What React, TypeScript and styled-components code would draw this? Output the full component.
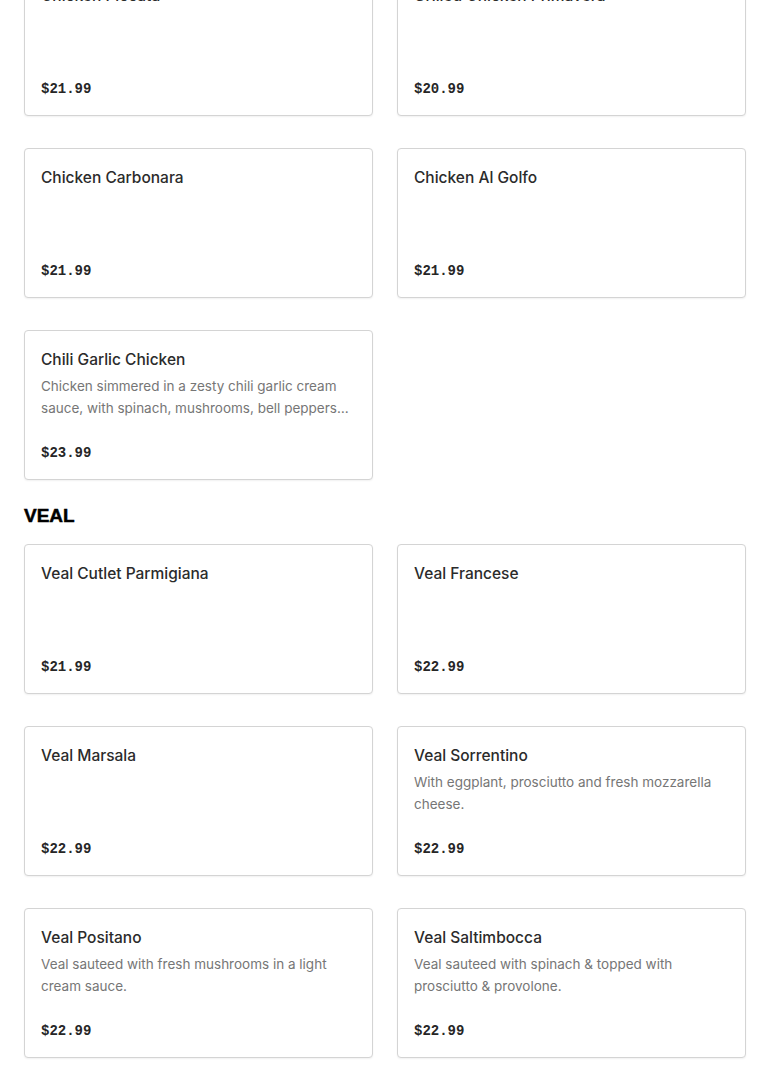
import React from "react";
import styled, { createGlobalStyle } from "styled-components";

interface Item {
  name: string;
  description?: string;
  price: string;
}

interface Section {
  title?: string;
  items: Item[];
}

const sections: Section[] = [
  {
    items: [
      { name: "Chicken Piccata", price: "$21.99" },
      { name: "Grilled Chicken Primavera", price: "$20.99" },
      { name: "Chicken Carbonara", price: "$21.99" },
      { name: "Chicken Al Golfo", price: "$21.99" },
      {
        name: "Chili Garlic Chicken",
        description:
          "Chicken simmered in a zesty chili garlic cream sauce, with spinach, mushrooms, bell peppers and onions over penne.",
        price: "$23.99",
      },
    ],
  },
  {
    title: "VEAL",
    items: [
      { name: "Veal Cutlet Parmigiana", price: "$21.99" },
      { name: "Veal Francese", price: "$22.99" },
      { name: "Veal Marsala", price: "$22.99" },
      {
        name: "Veal Sorrentino",
        description: "With eggplant, prosciutto and fresh mozzarella cheese.",
        price: "$22.99",
      },
      {
        name: "Veal Positano",
        description: "Veal sauteed with fresh mushrooms in a light cream sauce.",
        price: "$22.99",
      },
      {
        name: "Veal Saltimbocca",
        description: "Veal sauteed with spinach & topped with prosciutto & provolone.",
        price: "$22.99",
      },
      { name: "Veal Piccata", price: "$22.99" },
    ],
  },
];

const App: React.FC = () => {
  return (
    <>
      <GlobalStyle />
      <Page>
        {sections.map((section, i) => (
          <SectionBlock key={i}>
            {section.title && <SectionTitle>{section.title}</SectionTitle>}
            <Grid>
              {section.items.map((item) => (
                <Card key={item.name}>
                  <ItemName>{item.name}</ItemName>
                  {item.description && <Description>{item.description}</Description>}
                  <Price>{item.price}</Price>
                </Card>
              ))}
            </Grid>
          </SectionBlock>
        ))}
      </Page>
    </>
  );
};

export default App;

/** ============================= styled-components ============================= */

const GlobalStyle = createGlobalStyle`
  html, body {
    margin: 0;
    padding: 0;
    background: #ffffff;
    overflow: hidden;
  }
  body {
    font-family: Inter, "Liberation Sans", sans-serif;
    -webkit-font-smoothing: antialiased;
  }
`;

const Page = styled.main`
  margin-top: -34px;
  padding: 0 25px 0 24px;
  display: flex;
  flex-direction: column;
  gap: 24px;
`;

const SectionBlock = styled.section`
  display: flex;
  flex-direction: column;
`;

const SectionTitle = styled.h2`
  margin: 0 0 16px;
  font-family: "Liberation Sans", Arial, sans-serif;
  font-weight: 900;
  font-size: 19px;
  line-height: 24px;
  color: #000000;
  -webkit-text-stroke: 0.5px #000000;
`;

const Grid = styled.div`
  display: grid;
  grid-template-columns: 349px 349px;
  column-gap: 24px;
  row-gap: 32px;
`;

const Card = styled.article`
  box-sizing: border-box;
  height: 150px;
  padding: 16px;
  border: 1px solid #d4d4d4;
  border-radius: 4px;
  box-shadow: 0 1px 2px rgba(0, 0, 0, 0.06);
  background: #ffffff;
  display: flex;
  flex-direction: column;
`;

const ItemName = styled.h3`
  margin: 1px 0 0;
  font-family: Inter, "Liberation Sans", sans-serif;
  font-weight: 500;
  font-size: 15.5px;
  line-height: 24px;
  color: #2b2b2b;
  white-space: nowrap;
  overflow: hidden;
  text-overflow: ellipsis;
`;

const Description = styled.p`
  margin: 3px 0 0;
  font-family: Inter, "Liberation Sans", sans-serif;
  font-size: 13.5px;
  line-height: 22px;
  color: #767676;
  display: -webkit-box;
  -webkit-line-clamp: 2;
  -webkit-box-orient: vertical;
  overflow: hidden;
`;

const Price = styled.div`
  margin-top: auto;
  font-family: "Liberation Mono", "DejaVu Sans Mono", monospace;
  font-weight: 700;
  font-size: 14px;
  line-height: 20px;
  color: #262626;
`;
